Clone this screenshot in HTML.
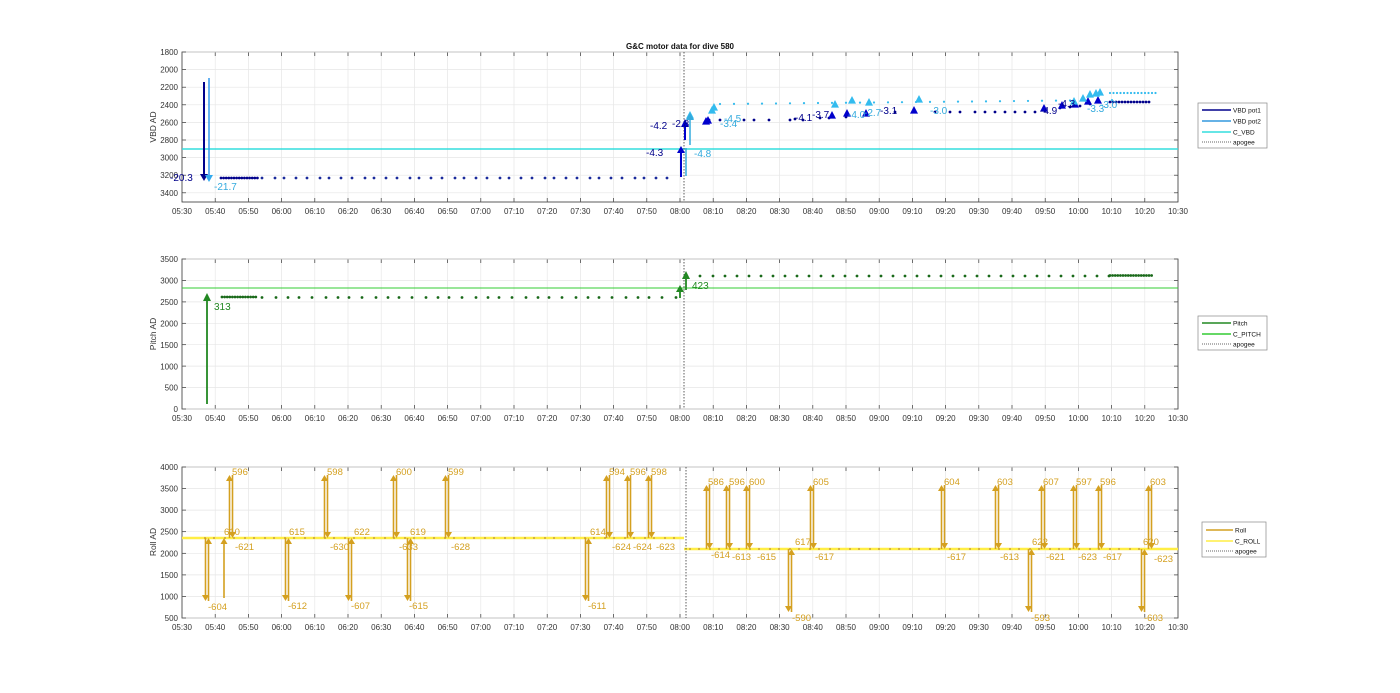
<!DOCTYPE html>
<html><head><meta charset="utf-8"><style>
html,body{margin:0;padding:0;background:#fff;width:1400px;height:693px;overflow:hidden}
svg{display:block;font-family:"Liberation Sans",sans-serif}
</style></head><body>
<svg id="s" width="1400" height="693" xmlns="http://www.w3.org/2000/svg">
<rect x="182" y="52" width="996" height="150" fill="#fff" stroke="#333" stroke-width="0.8"/>
<rect x="182" y="259" width="996" height="150" fill="#fff" stroke="#333" stroke-width="0.8"/>
<rect x="182" y="467" width="996" height="151" fill="#fff" stroke="#333" stroke-width="0.8"/>
<g id="grid"></g>
<text x="680" y="49" font-size="8" font-weight="bold" text-anchor="middle" fill="#111">G&amp;C motor data for dive 580</text>
<g font-size="8" fill="#333" text-anchor="end">
<text x="178" y="55">1800</text><text x="178" y="72.6">2000</text><text x="178" y="90.2">2200</text><text x="178" y="107.8">2400</text><text x="178" y="125.4">2600</text><text x="178" y="143">2800</text><text x="178" y="160.6">3000</text><text x="178" y="178.2">3200</text><text x="178" y="195.8">3400</text>
<text x="178" y="262">3500</text><text x="178" y="283.5">3000</text><text x="178" y="305">2500</text><text x="178" y="326.4">2000</text><text x="178" y="347.8">1500</text><text x="178" y="369.3">1000</text><text x="178" y="390.7">500</text><text x="178" y="412">0</text>
<text x="178" y="470">4000</text><text x="178" y="491.6">3500</text><text x="178" y="513.2">3000</text><text x="178" y="534.7">2500</text><text x="178" y="556.3">2000</text><text x="178" y="577.9">1500</text><text x="178" y="599.4">1000</text><text x="178" y="621">500</text>
</g>
<g font-size="8.5" fill="#333" text-anchor="middle">
<text transform="translate(156,127) rotate(-90)">VBD AD</text>
<text transform="translate(156,334) rotate(-90)">Pitch AD</text>
<text transform="translate(156,542) rotate(-90)">Roll AD</text>
</g>
<g font-size="8" fill="#333" text-anchor="middle">
<text x="182" y="214">05:30</text><text x="215.2" y="214">05:40</text><text x="248.4" y="214">05:50</text><text x="281.6" y="214">06:00</text><text x="314.8" y="214">06:10</text><text x="348" y="214">06:20</text><text x="381.2" y="214">06:30</text><text x="414.4" y="214">06:40</text><text x="447.6" y="214">06:50</text><text x="480.8" y="214">07:00</text><text x="514" y="214">07:10</text><text x="547.2" y="214">07:20</text><text x="580.4" y="214">07:30</text><text x="613.6" y="214">07:40</text><text x="646.8" y="214">07:50</text><text x="680" y="214">08:00</text><text x="713.2" y="214">08:10</text><text x="746.4" y="214">08:20</text><text x="779.6" y="214">08:30</text><text x="812.8" y="214">08:40</text><text x="846" y="214">08:50</text><text x="879.2" y="214">09:00</text><text x="912.4" y="214">09:10</text><text x="945.6" y="214">09:20</text><text x="978.8" y="214">09:30</text><text x="1012" y="214">09:40</text><text x="1045.2" y="214">09:50</text><text x="1078.4" y="214">10:00</text><text x="1111.6" y="214">10:10</text><text x="1144.8" y="214">10:20</text><text x="1178" y="214">10:30</text>
<text x="182" y="421">05:30</text><text x="215.2" y="421">05:40</text><text x="248.4" y="421">05:50</text><text x="281.6" y="421">06:00</text><text x="314.8" y="421">06:10</text><text x="348" y="421">06:20</text><text x="381.2" y="421">06:30</text><text x="414.4" y="421">06:40</text><text x="447.6" y="421">06:50</text><text x="480.8" y="421">07:00</text><text x="514" y="421">07:10</text><text x="547.2" y="421">07:20</text><text x="580.4" y="421">07:30</text><text x="613.6" y="421">07:40</text><text x="646.8" y="421">07:50</text><text x="680" y="421">08:00</text><text x="713.2" y="421">08:10</text><text x="746.4" y="421">08:20</text><text x="779.6" y="421">08:30</text><text x="812.8" y="421">08:40</text><text x="846" y="421">08:50</text><text x="879.2" y="421">09:00</text><text x="912.4" y="421">09:10</text><text x="945.6" y="421">09:20</text><text x="978.8" y="421">09:30</text><text x="1012" y="421">09:40</text><text x="1045.2" y="421">09:50</text><text x="1078.4" y="421">10:00</text><text x="1111.6" y="421">10:10</text><text x="1144.8" y="421">10:20</text><text x="1178" y="421">10:30</text>
<text x="182" y="630">05:30</text><text x="215.2" y="630">05:40</text><text x="248.4" y="630">05:50</text><text x="281.6" y="630">06:00</text><text x="314.8" y="630">06:10</text><text x="348" y="630">06:20</text><text x="381.2" y="630">06:30</text><text x="414.4" y="630">06:40</text><text x="447.6" y="630">06:50</text><text x="480.8" y="630">07:00</text><text x="514" y="630">07:10</text><text x="547.2" y="630">07:20</text><text x="580.4" y="630">07:30</text><text x="613.6" y="630">07:40</text><text x="646.8" y="630">07:50</text><text x="680" y="630">08:00</text><text x="713.2" y="630">08:10</text><text x="746.4" y="630">08:20</text><text x="779.6" y="630">08:30</text><text x="812.8" y="630">08:40</text><text x="846" y="630">08:50</text><text x="879.2" y="630">09:00</text><text x="912.4" y="630">09:10</text><text x="945.6" y="630">09:20</text><text x="978.8" y="630">09:30</text><text x="1012" y="630">09:40</text><text x="1045.2" y="630">09:50</text><text x="1078.4" y="630">10:00</text><text x="1111.6" y="630">10:10</text><text x="1144.8" y="630">10:20</text><text x="1178" y="630">10:30</text>
</g>
<line x1="182" y1="149" x2="1178" y2="149" stroke="#33dddd" stroke-width="1.5"/>
<line x1="182" y1="288" x2="1178" y2="288" stroke="#33cc33" stroke-width="1"/>
<line x1="182" y1="538" x2="684" y2="538" stroke="#ffee44" stroke-width="2.5"/>
<line x1="684" y1="549" x2="1178" y2="549" stroke="#ffee44" stroke-width="2.5"/>
<g stroke="#333" stroke-width="0.8" stroke-dasharray="1.5,1.5">
<line x1="684" y1="52" x2="684" y2="202"/><line x1="684" y1="259" x2="684" y2="409"/><line x1="686" y1="467" x2="686" y2="618"/>
</g>
<g id="data"></g>
<g font-size="10">
<line x1="204" y1="82" x2="204" y2="176" stroke="#00008b" stroke-width="2"/><path d="M200,174L208,174L204,181z" fill="#00008b"/>
<line x1="209" y1="78" x2="209" y2="176" stroke="#3399ee" stroke-width="1.5"/><path d="M205,175L213,175L209,182z" fill="#33aaee"/>
<text x="170" y="181" fill="#00008b">-20.3</text><text x="214" y="190" fill="#33aadd">-21.7</text>
<line x1="681" y1="177" x2="681" y2="152" stroke="#0000cc" stroke-width="2"/><path d="M677,153L685,153L681,146z" fill="#0000cc"/>
<line x1="685" y1="140" x2="685" y2="126" stroke="#0000cc" stroke-width="2"/><path d="M681,127L689,127L685,119z" fill="#0000cc"/>
<line x1="686" y1="176" x2="686" y2="148" stroke="#33aadd" stroke-width="1.5"/>
<line x1="690" y1="145" x2="690" y2="120" stroke="#33aadd" stroke-width="1.5"/><path d="M686,120L694,120L690,113z" fill="#33aadd"/>
<text x="646" y="156" fill="#00008b">-4.3</text><text x="650" y="129" fill="#00008b">-4.2</text><text x="672" y="127" fill="#00008b">-2.8</text>
<text x="694" y="157" fill="#33aadd">-4.8</text><text x="720" y="127" fill="#33aadd">-3.4</text><text x="724" y="122" fill="#33aadd">-4.5</text>
<text x="795" y="121" fill="#00008b">-4.1</text><text x="812" y="118" fill="#00008b">-3.7</text><text x="848" y="118" fill="#33aadd">-4.0</text><text x="864" y="116" fill="#33aadd">-2.7</text>
<text x="880" y="114" fill="#00008b">-3.1</text><text x="930" y="114" fill="#33aadd">-3.0</text><text x="1040" y="114" fill="#00008b">-4.9</text><text x="1058" y="107" fill="#00008b">-4.3</text>
<text x="1087" y="112" fill="#33aadd">-3.3</text><text x="1100" y="108" fill="#33aadd">-3.0</text>
</g>
<line x1="207" y1="404" x2="207" y2="300" stroke="#228822" stroke-width="1.8"/><path d="M203,301L211,301L207,293z" fill="#228822"/>
<text x="214" y="310" font-size="10" fill="#228822">313</text>
<line x1="680" y1="298" x2="680" y2="291" stroke="#228822" stroke-width="1.8"/><path d="M676,292L684,292L680,285z" fill="#228822"/>
<line x1="686" y1="290" x2="686" y2="278" stroke="#228822" stroke-width="1.8"/><path d="M682,279L690,279L686,271z" fill="#228822"/>
<text x="692" y="289" font-size="10" fill="#228822">423</text>
<g font-size="6.5" fill="#111">
<rect x="1198" y="103" width="69" height="45" fill="#fff" stroke="#888" stroke-width="0.7"/>
<line x1="1202" y1="110" x2="1231" y2="110" stroke="#00008b" stroke-width="1.5"/><text x="1233" y="112.5">VBD pot1</text>
<line x1="1202" y1="121" x2="1231" y2="121" stroke="#3399dd" stroke-width="1.5"/><text x="1233" y="123.5">VBD pot2</text>
<line x1="1202" y1="132" x2="1231" y2="132" stroke="#33dddd" stroke-width="1.5"/><text x="1233" y="134.5">C_VBD</text>
<line x1="1202" y1="142" x2="1231" y2="142" stroke="#333" stroke-width="0.8" stroke-dasharray="1,1"/><text x="1233" y="144.5">apogee</text>
<rect x="1198" y="316" width="69" height="34" fill="#fff" stroke="#888" stroke-width="0.7"/>
<line x1="1202" y1="323" x2="1231" y2="323" stroke="#228822" stroke-width="1.5"/><text x="1233" y="325.5">Pitch</text>
<line x1="1202" y1="334" x2="1231" y2="334" stroke="#33cc33" stroke-width="1.5"/><text x="1233" y="336.5">C_PITCH</text>
<line x1="1202" y1="344" x2="1231" y2="344" stroke="#333" stroke-width="0.8" stroke-dasharray="1,1"/><text x="1233" y="346.5">apogee</text>
<rect x="1202" y="522" width="64" height="35" fill="#fff" stroke="#888" stroke-width="0.7"/>
<line x1="1206" y1="530" x2="1233" y2="530" stroke="#d4a020" stroke-width="1.5"/><text x="1235" y="532.5">Roll</text>
<line x1="1206" y1="541" x2="1233" y2="541" stroke="#ffee44" stroke-width="1.5"/><text x="1235" y="543.5">C_ROLL</text>
<line x1="1206" y1="551" x2="1233" y2="551" stroke="#333" stroke-width="0.8" stroke-dasharray="1,1"/><text x="1235" y="553.5">apogee</text>
</g>
<g font-size="9.5" fill="#d4a020">
<text x="232" y="475">596</text><text x="235" y="550">-621</text>
<text x="327" y="475">598</text><text x="330" y="550">-630</text>
<text x="396" y="475">600</text><text x="399" y="550">-633</text>
<text x="448" y="475">599</text><text x="451" y="550">-628</text>
<text x="609" y="475">594</text><text x="612" y="550">-624</text>
<text x="630" y="475">596</text><text x="633" y="550">-624</text>
<text x="651" y="475">598</text><text x="656" y="550">-623</text>
<text x="708" y="485">586</text><text x="711" y="558">-614</text>
<text x="729" y="485">596</text><text x="732" y="560">-613</text>
<text x="749" y="485">600</text><text x="757" y="560">-615</text>
<text x="813" y="485">605</text><text x="815" y="560">-617</text>
<text x="944" y="485">604</text><text x="947" y="560">-617</text>
<text x="997" y="485">603</text><text x="1000" y="560">-613</text>
<text x="1043" y="485">607</text><text x="1046" y="560">-621</text>
<text x="1076" y="485">597</text><text x="1078" y="560">-623</text>
<text x="1100" y="485">596</text><text x="1103" y="560">-617</text>
<text x="1150" y="485">603</text><text x="1154" y="562">-623</text>
<text x="208" y="610">-604</text><text x="224" y="535">610</text>
<text x="288" y="609">-612</text><text x="289" y="535">615</text>
<text x="351" y="609">-607</text><text x="354" y="535">622</text>
<text x="409" y="609">-615</text><text x="410" y="535">619</text>
<text x="588" y="609">-611</text><text x="590" y="535">614</text>
<text x="792" y="621">-590</text><text x="795" y="545">617</text>
<text x="1031" y="621">-593</text><text x="1032" y="545">622</text>
<text x="1144" y="621">-603</text><text x="1143" y="545">620</text>
</g>
</svg>
<script>
const NS="http://www.w3.org/2000/svg";
function el(p,t,a){const e=document.createElementNS(NS,t);for(const k in a)e.setAttribute(k,a[k]);p.appendChild(e);return e;}
const g=document.getElementById('grid'),d=document.getElementById('data');
const axes=[[52,202,[52,69.6,87.2,104.8,122.4,140,157.6,175.2,192.8]],[259,409,[259,280.4,301.9,323.3,344.7,366.1,387.6,409]],[467,618,[467,488.6,510.1,531.7,553.3,574.9,596.4,618]]];
axes.forEach(([t,b,ys])=>{
 for(let i=1;i<30;i++){const x=182+i*33.2;el(g,'line',{x1:x,y1:t,x2:x,y2:b,stroke:'#e6e6e6','stroke-width':0.7});el(g,'line',{x1:x,y1:b,x2:x,y2:b-4,stroke:'#333','stroke-width':0.7});el(g,'line',{x1:x,y1:t,x2:x,y2:t+4,stroke:'#333','stroke-width':0.7});}
 ys.forEach(y=>{el(g,'line',{x1:182,y1:y,x2:1178,y2:y,stroke:'#e6e6e6','stroke-width':0.7});el(g,'line',{x1:182,y1:y,x2:186,y2:y,stroke:'#333','stroke-width':0.7});el(g,'line',{x1:1178,y1:y,x2:1174,y2:y,stroke:'#333','stroke-width':0.7});});
});
function dot(x,y,c,r){el(d,'circle',{cx:x,cy:y,r:r||1.4,fill:c});}
for(let x=221;x<258;x+=2.6){dot(x,178,'#00008b');}
for(let x=262;x<680;x+=9+((x*7)%5)){dot(x,178,'#1a2a9b');if((x|0)%3==0)dot(x+3,177,'#33aadd',1.1);}
const pb=[[705,122],[709,120],[720,120],[744,120],[754,120],[769,120],[790,120],[795,119],[803,120],[820,118],[829,118],[846,117],[866,114],[895,112],[915,112],[935,112],[950,112],[960,112],[975,112],[985,112],[995,112],[1005,112],[1015,112],[1025,112],[1035,112],[1045,111],[1060,108],[1070,107],[1080,106],[1090,104]];
pb.forEach(p=>dot(p[0],p[1],'#00008b'));
for(let x=1110;x<1152;x+=3)dot(x,102,'#00008b');
for(let x=720;x<1115;x+=10+((x*3)%7))dot(x,104-(x-720)*0.01,'#33bbee',1.1);
for(let x=1110;x<1158;x+=3.5)dot(x,93,'#33bbee',1.1);
const tri=(x,y,c,s)=>el(d,'path',{d:`M${x-s},${y+s*0.9}L${x+s},${y+s*0.9}L${x},${y-s}z`,fill:c});
[[706,121],[708,120],[832,115],[847,113],[866,113],[914,110],[1044,108],[1062,105],[1075,104],[1088,101],[1098,100]].forEach(p=>tri(p[0],p[1],'#0000cc',4));
[[690,115],[712,110],[714,107],[835,104],[852,100],[869,102],[919,99],[1074,101],[1083,98],[1090,94],[1096,93],[1100,92]].forEach(p=>tri(p[0],p[1],'#33bbee',4));
for(let x=222;x<258;x+=2.6)dot(x,297,'#1a6a1a');
for(let x=262;x<680;x+=10+((x*7)%5))dot(x,297.5,'#1a6a1a');
for(let x=700;x<1110;x+=11+((x*5)%6))dot(x,276,'#1a6a1a');
for(let x=1110;x<1152;x+=2.6)dot(x,275.5,'#1a6a1a');
for(let x=205;x<680;x+=9+((x*3)%5))dot(x,538,'#c8a040',1);
for(let x=690;x<1140;x+=9+((x*3)%5))dot(x,549,'#c8a040',1);
const RC='#d4a020';
function arr(x,y1,y2){el(d,'line',{x1:x,y1:y1,x2:x,y2:y2+(y2<y1?4:-4),stroke:RC,'stroke-width':1.6});const s=y2<y1?1:-1;el(d,'path',{d:`M${x-3.5},${y2+s*6}L${x+3.5},${y2+s*6}L${x},${y2}z`,fill:RC});}
[[231,538,475],[326,538,475],[395,538,475],[447,538,475],[608,538,475],[629,538,475],[650,538,475]].forEach(([x,b,t])=>{arr(x-1.5,b,t);arr(x+1.5,t,b);});
[[708,549,485],[728,549,485],[748,549,485],[812,549,485],[943,549,485],[997,549,485],[1043,549,485],[1075,549,485],[1100,549,485],[1150,549,485]].forEach(([x,b,t])=>{arr(x-1.5,b,t);arr(x+1.5,t,b);});
[[207,538,601],[287,538,601],[350,538,601],[409,538,601],[587,538,601]].forEach(([x,b,t])=>{arr(x-1.5,b,t);arr(x+1.5,t,b);});
arr(224,598,538);
[[790,549,612],[1030,549,612],[1143,549,612]].forEach(([x,b,t])=>{arr(x-1.5,b,t);arr(x+1.5,t,b);});
</script>
</body></html>
